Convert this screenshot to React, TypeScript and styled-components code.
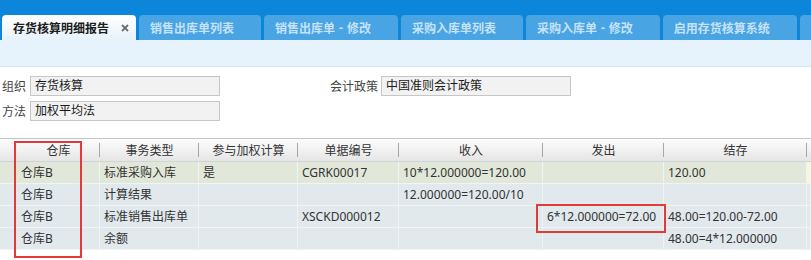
import React from 'react';
import styled, { createGlobalStyle } from 'styled-components';

const GlobalStyle = createGlobalStyle`
  html, body { margin: 0; padding: 0; background: #fff; }
  body {
    font-family: "Noto Sans", "Noto Sans CJK SC", sans-serif;
    font-size: 12px;
    color: #333;
    overflow: hidden;
  }
`;

const Page = styled.div`
  width: 811px;
  height: 260px;
  overflow: hidden;
  background: #fff;
`;

const TabBar = styled.div`
  height: 40px;
  box-sizing: border-box;
  padding: 15px 0 0 2px;
  background: #0b86da;
  display: flex;
  align-items: flex-end;
  gap: 3px;
  overflow: hidden;
  white-space: nowrap;
`;

const Tab = styled.div<{ $active?: boolean }>`
  flex: none;
  height: 25px;
  display: flex;
  align-items: center;
  padding-left: 11px;
  border-radius: 4px 4px 0 0;
  font-size: 12px;
  font-weight: bold;
  background: ${p => (p.$active ? 'linear-gradient(#ffffff, #e6f2fb)' : '#49a4e4')};
  color: ${p => (p.$active ? '#1c1c1c' : '#c6e2f7')};
`;

const Dash = styled.span`
  margin: 0 4px;
`;

const CloseSlot = styled.span<{ $visible?: boolean }>`
  width: 27px;
  box-sizing: border-box;
  padding-left: 12px;
  display: flex;
  align-items: center;
  visibility: ${p => (p.$visible ? 'visible' : 'hidden')};
`;

const SubStrip = styled.div`
  height: 26px;
  background: #e6f3fc;
  border-bottom: 1px solid #d4e6f4;
`;

const Form = styled.div`
  padding: 9px 0 0 2px;
  height: 71px;
  box-sizing: border-box;
  display: flex;
  flex-direction: column;
  gap: 5px;
`;

const FormRow = styled.div`
  display: flex;
  gap: 110px;
`;

const Field = styled.div`
  display: flex;
  align-items: center;
  gap: 3px;
`;

const Label = styled.span`
  min-width: 25px;
  color: #444;
  font-size: 12px;
`;

const Input = styled.div`
  width: 190px;
  height: 20px;
  box-sizing: border-box;
  border: 1px solid #c6c6c6;
  background: #f2f2f2;
  padding-left: 4px;
  line-height: 18px;
  color: #1a1a1a;
  font-size: 12px;
`;

const TableArea = styled.div`
  position: relative;
  border-top: 1px solid #c4c4c4;
`;

const Grid = styled.table`
  width: 811px;
  table-layout: fixed;
  border-collapse: separate;
  border-spacing: 0;
`;

const HeadCell = styled.th<{ $sep?: boolean }>`
  position: relative;
  height: 22px;
  padding: 0;
  font-weight: normal;
  text-align: center;
  color: #333;
  font-size: 12px;
  background: linear-gradient(#fdfdfd, #e5e5e5);
  border-bottom: 1px solid #d3d3d3;
  &::after {
    content: '';
    display: ${p => (p.$sep ? 'block' : 'none')};
    position: absolute;
    right: 0;
    top: 4px;
    bottom: 4px;
    width: 1px;
    background: #a8a8a8;
  }
`;

const Row = styled.tr<{ $tone: 'green' | 'blue' }>`
  height: 22px;
  background: ${p => (p.$tone === 'green' ? '#e2e8d9' : '#e1e9ed')};
`;

const Cell = styled.td<{ $lead?: boolean; $filler?: string }>`
  padding: 0 4px;
  height: 21px;
  line-height: 21px;
  white-space: nowrap;
  overflow: hidden;
  color: #333;
  font-size: 12px;
  border-bottom: 1px solid #f1f4f5;
  border-right: ${p => (p.$lead ? 'none' : '1px solid #f1f4f5')};
  ${p => (p.$filler ? `background: ${p.$filler};` : '')}
`;

const Mark = styled.div`
  position: absolute;
  box-sizing: border-box;
  border: 2px solid #e23a3a;
  pointer-events: none;
`;

const tabs: [string, string?][] = [
  ['存货核算明细报告'],
  ['销售出库单列表'],
  ['销售出库单', '修改'],
  ['采购入库单列表'],
  ['采购入库单', '修改'],
  ['启用存货核算系统'],
  [''],
];

const widths = [17, 83, 99, 99, 101, 144, 121, 143, 4];
const heads = ['', '仓库', '事务类型', '参与加权计算', '单据编号', '收入', '发出', '结存', ''];

const rows: { tone: 'green' | 'blue'; cells: string[]; filler: string }[] = [
  { tone: 'green', filler: '#fbf3da', cells: ['仓库B', '标准采购入库', '是', 'CGRK00017', '10*12.000000=120.00', '', '120.00'] },
  { tone: 'blue', filler: '#e1e9ed', cells: ['仓库B', '计算结果', '', '', '12.000000=120.00/10', '', ''] },
  { tone: 'blue', filler: '#e1e9ed', cells: ['仓库B', '标准销售出库单', '', 'XSCKD000012', '', '6*12.000000=72.00', '48.00=120.00-72.00'] },
  { tone: 'blue', filler: '#e1e9ed', cells: ['仓库B', '余额', '', '', '', '', '48.00=4*12.000000'] },
];

const CloseIcon = () => (
  <svg width="8" height="8" viewBox="0 0 8 8">
    <path d="M1 1L7 7M7 1L1 7" stroke="#6e6e6e" strokeWidth="1.8" />
  </svg>
);

export default function App() {
  return (
    <Page>
      <GlobalStyle />
      <TabBar>
        {tabs.map(([a, b], i) => (
          <Tab key={i} $active={i === 0}>
            {a}
            {b && (
              <>
                <Dash>-</Dash>
                {b}
              </>
            )}
            <CloseSlot $visible={i === 0}>
              <CloseIcon />
            </CloseSlot>
          </Tab>
        ))}
      </TabBar>
      <SubStrip />
      <Form>
        <FormRow>
          <Field>
            <Label>组织</Label>
            <Input>存货核算</Input>
          </Field>
          <Field>
            <Label>会计政策</Label>
            <Input>中国准则会计政策</Input>
          </Field>
        </FormRow>
        <FormRow>
          <Field>
            <Label>方法</Label>
            <Input>加权平均法</Input>
          </Field>
        </FormRow>
      </Form>
      <TableArea>
        <Grid>
          <colgroup>
            {widths.map((w, i) => (
              <col key={i} style={{ width: w }} />
            ))}
          </colgroup>
          <thead>
            <tr>
              {heads.map((h, i) => (
                <HeadCell key={i} $sep={i > 0 && i < heads.length - 1}>
                  {h}
                </HeadCell>
              ))}
            </tr>
          </thead>
          <tbody>
            {rows.map((r, ri) => (
              <Row key={ri} $tone={r.tone}>
                <Cell $lead />
                {r.cells.map((c, ci) => (
                  <Cell key={ci}>{c}</Cell>
                ))}
                <Cell $filler={r.filler} />
              </Row>
            ))}
          </tbody>
        </Grid>
        <Mark style={{ left: 14, top: 2, width: 68, height: 117 }} />
        <Mark style={{ left: 536, top: 65, width: 130, height: 29 }} />
      </TableArea>
    </Page>
  );
}
